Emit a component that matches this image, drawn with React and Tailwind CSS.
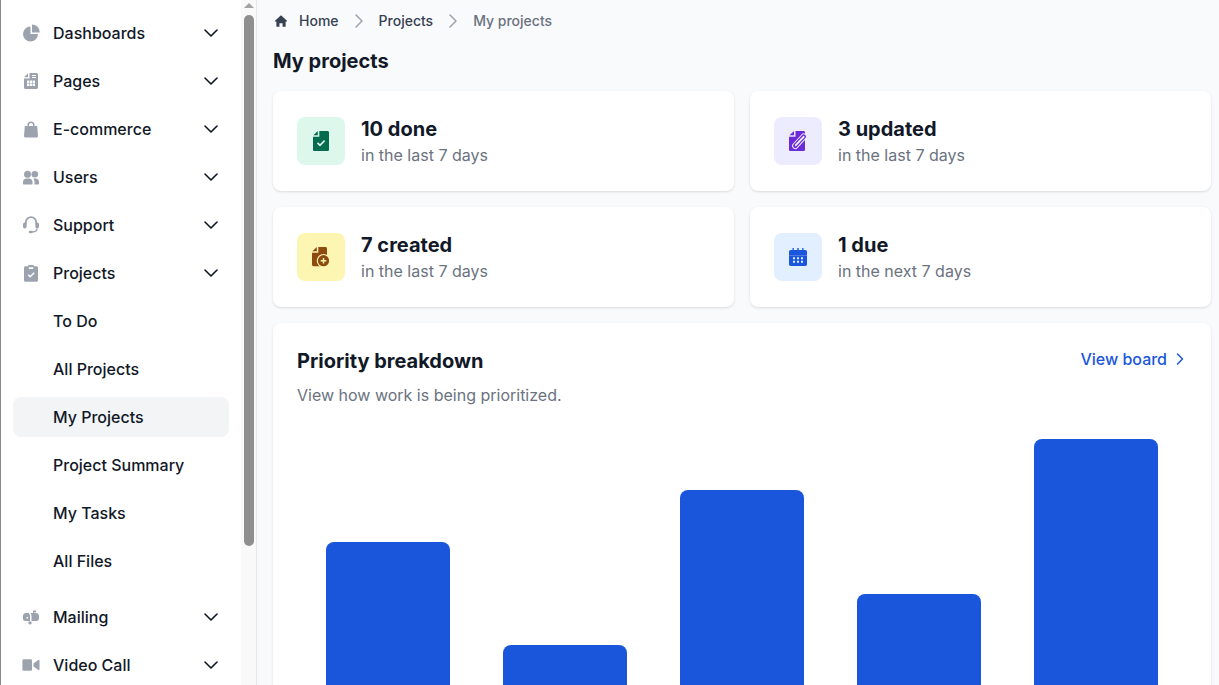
import { ChevronRight } from "lucide-react";

const navTop = [
  { name: "Dashboards", icon: PieIcon },
  { name: "Pages", icon: PagesIcon },
  { name: "E-commerce", icon: BagIcon },
  { name: "Users", icon: UsersIcon },
  { name: "Support", icon: SupportIcon },
  { name: "Projects", icon: ClipboardIcon },
];

const projectLinks = ["To Do", "All Projects", "My Projects", "Project Summary", "My Tasks", "All Files"];

const navBottom = [
  { name: "Mailing", icon: MailboxIcon },
  { name: "Video Call", icon: VideoIcon },
];

const stats = [
  { title: "10 done", sub: "in the last 7 days", box: "bg-[#def7ec]", color: "text-[#046c4e]", icon: DocCheckIcon },
  { title: "3 updated", sub: "in the last 7 days", box: "bg-[#edebfe]", color: "text-[#6c2bd9]", icon: DocPenIcon },
  { title: "7 created", sub: "in the last 7 days", box: "bg-[#fdf6b2]", color: "text-[#8e4b10]", icon: DocPlusIcon },
  { title: "1 due", sub: "in the next 7 days", box: "bg-[#e1effe]", color: "text-[#1a56db]", icon: CalendarIcon },
];

const bars = [257, 154, 309, 205, 360];

function PieIcon() {
  return (
    <svg viewBox="0 0 18 18" className="w-[18px] h-[18px]" fill="currentColor">
      <path d="M8.500 2.500a7.500 7.500 0 1 0 7.500 7.500H8.500V2.500Z" />
      <path d="M10 .5v8h7.800A7.800 7.800 0 0 0 10 .5Z" />
    </svg>
  );
}

function PagesIcon() {
  return (
    <svg viewBox="0 0 18 18" className="w-[18px] h-[18px]" fill="currentColor">
      <path d="M6 1.200v4H2.200L6 1.200Z" />
      <path
        fillRule="evenodd"
        d="M7.500 1h7c.8 0 1.500.7 1.500 1.500v13c0 .8-.7 1.500-1.500 1.500h-11C2.700 17 2 16.300 2 15.500V6.500h5.500V1ZM10 3v1h4V3h-4Zm0 2v1h4V5h-4ZM5 8.500v2.500h2.300V8.500H5Zm2.900 0v2.500h2.300V8.500H7.900Zm2.900 0v2.500h2.200V8.500h-2.200ZM5 11.600v2.500h2.300v-2.500H5Zm2.900 0v2.500h2.300v-2.500H7.900Zm2.900 0v2.500h2.200v-2.500h-2.200Z"
      />
    </svg>
  );
}

function BagIcon() {
  return (
    <svg viewBox="0 0 18 18" className="w-[18px] h-[18px]" fill="currentColor">
      <path
        fillRule="evenodd"
        d="M5.500 6V5a3.500 3.500 0 0 1 7 0v1h2.700l.8 10c.1.800-.5 1.400-1.200 1.400H3.200c-.7 0-1.300-.6-1.200-1.400l.8-10h2.700ZM7 6h4V5a2 2 0 0 0-4 0v1Z"
      />
    </svg>
  );
}

function UsersIcon() {
  return (
    <svg viewBox="0 0 18 18" className="w-[18px] h-[18px]" fill="currentColor">
      <circle cx="5.500" cy="6.300" r="3.500" />
      <circle cx="12.800" cy="6.300" r="3.300" />
      <path d="M1 14c0-2 1.600-3.500 3.500-3.500h2.500c1.900 0 3.500 1.500 3.500 3.500v2.500H2c-.6 0-1-.4-1-1V14Z" />
      <path d="M11.500 16.500H16c.6 0 1-.4 1-1V14c0-2-1.500-3.500-3.500-3.500h-2.300c.8.900 1.300 2.100 1.300 3.500v2.500Z" />
    </svg>
  );
}

function SupportIcon() {
  return (
    <svg viewBox="0 0 18 18" className="w-[18px] h-[18px]" fill="none">
      <path d="M3.800 8V6.400a5.200 5.200 0 0 1 10.400 0V8" stroke="currentColor" strokeWidth="1.800" />
      <rect x="1" y="6.500" width="3.600" height="6" rx="1.700" fill="currentColor" />
      <rect x="13.400" y="6.500" width="3.600" height="6" rx="1.700" fill="currentColor" />
      <path d="M15 12.500c0 2.100-1.700 3.400-4 3.400H9.500" stroke="currentColor" strokeWidth="1.300" />
      <rect x="6.800" y="14.700" width="4" height="2.600" rx="1.300" fill="currentColor" />
    </svg>
  );
}

function ClipboardIcon() {
  return (
    <svg viewBox="0 0 18 18" className="w-[18px] h-[18px]" fill="currentColor">
      <path
        fillRule="evenodd"
        d="M6 2.200C6 1.500 6.600 1 7.300 1h3.400c.7 0 1.300.5 1.300 1.200h2.500c.8 0 1.500.7 1.500 1.500v12.500c0 .8-.7 1.500-1.500 1.500h-11c-.8 0-1.500-.7-1.500-1.500V3.700c0-.8.7-1.500 1.500-1.500H6Zm.800 1v1.800h4.400V3.200H6.800Zm5.900 6-1-1-3.500 3.500-1.500-1.500-1 1 2.500 2.500 4.500-4.500Z"
      />
    </svg>
  );
}

function MailboxIcon() {
  return (
    <svg viewBox="0 0 18 18" className="w-[18px] h-[18px]" fill="currentColor">
      <path
        fillRule="evenodd"
        d="M4 5h2.800C7.600 6 8 7.100 8 8.300V13H3.500A2.500 2.500 0 0 1 1 10.500V8c0-1.700 1.300-3 3-3Zm.5 4v1.500H6V9H4.500Z"
      />
      <path d="M6.500 13.500h3v1.800c0 .7-.5 1.200-1.200 1.200h-.6c-.7 0-1.200-.5-1.200-1.200v-1.800Z" />
      <path d="M11 2.500h3v1.700h-1.700V5H14c1.700 0 3 1.300 3 3v2.500c0 1.400-1.100 2.500-2.500 2.500H9.500V8.300c0-1.200-.3-2.300-1-3.300H11V2.500Z" />
    </svg>
  );
}

function VideoIcon() {
  return (
    <svg viewBox="0 0 18 18" className="w-[18px] h-[18px]" fill="currentColor">
      <rect x=".4" y="3.300" width="9.600" height="11.400" rx="1.300" />
      <path d="M11.500 7.400 16.400 4c.5-.3 1.100 0 1.100.6v8.800c0 .6-.6.9-1.100.6l-4.900-3.400V7.400Z" />
    </svg>
  );
}

function HomeIcon() {
  return (
    <svg viewBox="0.5 0.5 13 13" className="w-3 h-3" fill="currentColor">
      <path d="M7 .8.500 6.800c-.3.300-.1.800.3.800H2v5c0 .4.300.7.700.7h2.600V9.500h3.400v3.800h2.600c.4 0 .7-.3.700-.7v-5h1.200c.4 0 .6-.5.300-.8L7 .8Z" />
    </svg>
  );
}

function DocCheckIcon() {
  return (
    <svg viewBox="0 0 16 20" className="w-4 h-5" fill="currentColor">
      <path d="M4.800 0v4.300H.4L4.800 0Z" />
      <path d="M6.300 0h8.100C15.300 0 16 .7 16 1.600v16.800c0 .9-.7 1.600-1.600 1.600H1.600C.7 20 0 19.300 0 18.400V5.800h6.300V0Z" />
      <path d="m4.500 11.800 2.500 2.500 4.600-4.700" fill="none" stroke="#def7ec" strokeWidth="1.700" />
    </svg>
  );
}

function DocPenIcon() {
  return (
    <svg viewBox="0 0 18 20" className="w-[18px] h-5" fill="currentColor">
      <path d="M5 0v4.300H.5L5 0Z" />
      <path d="M6.500 0h8c.9 0 1.500.7 1.500 1.500V18.400c0 .9-.7 1.600-1.600 1.600H1.600C.7 20 0 19.300 0 18.400V5.800h6.500V0Z" />
      <path d="M6.300 14.800 14.800 5.600" stroke="#edebfe" strokeWidth="6.400" strokeLinecap="round" />
      <path d="M6.300 14.800 14.800 5.600" stroke="currentColor" strokeWidth="4.400" strokeLinecap="round" />
      <path d="M6.800 14.200 14.600 5.800" stroke="#edebfe" strokeWidth="1.900" strokeLinecap="round" />
    </svg>
  );
}

function DocPlusIcon() {
  return (
    <svg viewBox="0 0 18 20" className="w-[18px] h-5" fill="currentColor">
      <path d="M4.800 0v4.300H.4L4.800 0Z" />
      <path d="M6.300 0h7.100c.9 0 1.600.7 1.600 1.600v16c0 .9-.7 1.600-1.600 1.600H1.600C.7 19.200 0 18.500 0 17.600V5.800h6.300V0Z" />
      <circle cx="11.500" cy="13.700" r="6.800" fill="#fdf6b2" />
      <circle cx="11.500" cy="13.700" r="5.600" />
      <path d="M11.500 10.900v5.600M8.700 13.700h5.600" stroke="#fdf6b2" strokeWidth="1.500" />
    </svg>
  );
}

function CalendarIcon() {
  return (
    <svg viewBox="0 0 18 18" className="w-[18px] h-[18px]" fill="currentColor">
      <path d="M3.500 0h1.300v2h3.500V0h1.400v2h3.500V0h1.300v2h1.800C17.200 2 18 2.800 18 3.700V7H0V3.700C0 2.800.8 2 1.700 2h1.800V0Z" />
      <path
        fillRule="evenodd"
        d="M0 7.300h18v9c0 .9-.8 1.700-1.700 1.700H1.700C.8 18 0 17.200 0 16.300v-9Zm4 1.900v2h2v-2H4Zm4 0v2h2v-2H8Zm4 0v2h2v-2h-2Zm-8 3.500v2h2v-2H4Zm4 0v2h2v-2H8Zm4 0v2h2v-2h-2Z"
      />
    </svg>
  );
}

function ChevronDown() {
  return (
    <svg viewBox="0 0 14 8" className="w-3.5 h-2" fill="none" stroke="#111827" strokeWidth="1.600" strokeLinecap="round" strokeLinejoin="round">
      <path d="m1 1 6 6 6-6" />
    </svg>
  );
}

function NavItem({ item }) {
  const Icon = item.icon;
  return (
    <div className="h-12 flex items-center pl-[21px] pr-[23px] shrink-0">
      <span className="w-[18px] flex justify-center text-[#9ca3af] shrink-0">
        <Icon />
      </span>
      <span className="ml-[13px] flex-1 text-base font-medium text-[#111827]">{item.name}</span>
      <ChevronDown />
    </div>
  );
}

function StatCard({ stat }) {
  const Icon = stat.icon;
  return (
    <div className="h-[100px] bg-white rounded-lg shadow-sm flex items-center px-6">
      <div className={`w-12 h-12 rounded-lg flex items-center justify-center ${stat.box} ${stat.color}`}>
        <Icon />
      </div>
      <div className="ml-4">
        <div className="text-xl leading-[26px] font-bold text-[#111827]">{stat.title}</div>
        <div className="text-base leading-6 text-[#6b7280] mt-[1px]">{stat.sub}</div>
      </div>
    </div>
  );
}

export default function App() {
  return (
    <div className="h-[685px] w-[1219px] flex overflow-hidden bg-[#f9fafb] font-['Inter',sans-serif]">
      <aside className="w-[257px] shrink-0 flex bg-white border-l border-l-[#8a8a8a] border-r border-r-[#e5e7eb] overflow-hidden">
        <nav className="w-[240px] shrink-0 pt-[9px] flex flex-col">
          {navTop.map((item) => (
            <NavItem key={item.name} item={item} />
          ))}
          {projectLinks.map((name) => (
            <div key={name} className="h-12 shrink-0 flex items-center px-3">
              <div
                className={
                  "w-[216px] h-10 rounded-lg flex items-center pl-10 text-base font-medium text-[#111827] " +
                  (name === "My Projects" ? "bg-[#f3f4f6]" : "")
                }
              >
                {name}
              </div>
            </div>
          ))}
          <div className="h-2 shrink-0" />
          {navBottom.map((item) => (
            <NavItem key={item.name} item={item} />
          ))}
        </nav>
        <div className="w-[15px] shrink-0 bg-[#f9f9f9] flex flex-col items-center">
          <div className="mt-[3px] w-0 h-0 border-x-[5px] border-x-transparent border-b-[5px] border-b-[#a3a3a3]" />
          <div className="mt-[7px] w-2.5 h-[531px] rounded-full bg-[#8f8f8f]" />
        </div>
      </aside>

      <main className="flex-1 pl-4 pr-2 pt-3">
        <div className="h-[18px] flex items-center text-sm font-medium">
          <span className="ml-[2px] text-[#374151]">
            <HomeIcon />
          </span>
          <span className="ml-3 text-[#374151]">Home</span>
          <ChevronRight className="w-6 h-6 mx-2 text-[#9ca3af]" strokeWidth={1.5} />
          <span className="text-[#374151]">Projects</span>
          <ChevronRight className="w-6 h-6 mx-2 text-[#9ca3af]" strokeWidth={1.5} />
          <span className="text-[#6b7280]">My projects</span>
        </div>
        <h1 className="mt-[17px] text-xl leading-7 font-bold text-[#111827]">My projects</h1>
        <div className="mt-4 grid grid-cols-2 gap-4">
          {stats.map((stat) => (
            <StatCard key={stat.title} stat={stat} />
          ))}
        </div>
        <section className="mt-4 bg-white rounded-lg shadow-sm px-6 pt-6 pb-6">
          <div className="flex items-start justify-between">
            <h2 className="text-xl leading-7 font-bold text-[#111827]">Priority breakdown</h2>
            <a className="flex items-center text-base leading-6 font-medium text-[#1a56db] -mr-[3px]">
              View board
              <ChevronRight className="w-5 h-5 ml-[3px]" strokeWidth={1.8} />
            </a>
          </div>
          <p className="mt-2 text-base leading-6 text-[#6b7280]">View how work is being prioritized.</p>
          <div className="mt-8 h-[360px] flex items-end pl-[2px] pr-[3px]">
            {bars.map((h, i) => (
              <div key={i} className="flex-1 flex justify-center">
                <div className="w-[124px] bg-[#1a56db] rounded-t-lg" style={{ height: h }} />
              </div>
            ))}
          </div>
        </section>
      </main>
    </div>
  );
}
